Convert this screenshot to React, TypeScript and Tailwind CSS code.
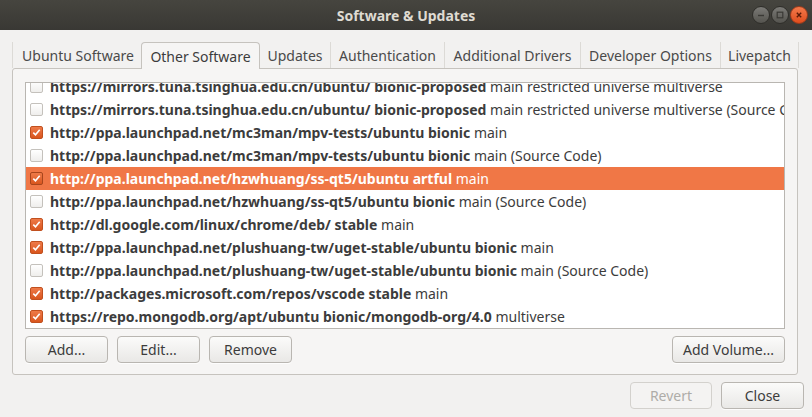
import React from 'react';

type Source = {
  uri: string;
  comps: string;
  checked: boolean;
  selected?: boolean;
};

const sources: Source[] = [
  { uri: 'https://mirrors.tuna.tsinghua.edu.cn/ubuntu/ bionic-proposed', comps: 'main restricted universe multiverse', checked: false },
  {
    uri: 'https://mirrors.tuna.tsinghua.edu.cn/ubuntu/ bionic-proposed',
    comps: 'main restricted universe multiverse (Source Code)',
    checked: false,
  },
  { uri: 'http://ppa.launchpad.net/mc3man/mpv-tests/ubuntu bionic', comps: 'main', checked: true },
  { uri: 'http://ppa.launchpad.net/mc3man/mpv-tests/ubuntu bionic', comps: 'main (Source Code)', checked: false },
  { uri: 'http://ppa.launchpad.net/hzwhuang/ss-qt5/ubuntu artful', comps: 'main', checked: true, selected: true },
  { uri: 'http://ppa.launchpad.net/hzwhuang/ss-qt5/ubuntu bionic', comps: 'main (Source Code)', checked: false },
  { uri: 'http://dl.google.com/linux/chrome/deb/ stable', comps: 'main', checked: true },
  { uri: 'http://ppa.launchpad.net/plushuang-tw/uget-stable/ubuntu bionic', comps: 'main', checked: true },
  { uri: 'http://ppa.launchpad.net/plushuang-tw/uget-stable/ubuntu bionic', comps: 'main (Source Code)', checked: false },
  { uri: 'http://packages.microsoft.com/repos/vscode stable', comps: 'main', checked: true },
  { uri: 'https://repo.mongodb.org/apt/ubuntu bionic/mongodb-org/4.0', comps: 'multiverse', checked: true },
];

const tabs = [
  { label: 'Ubuntu Software', w: 'w-[129px]' },
  { label: 'Other Software', w: 'w-[119px]', active: true },
  { label: 'Updates', w: 'w-[71px]' },
  { label: 'Authentication', w: 'w-[114px]' },
  { label: 'Additional Drivers', w: 'w-[136px]' },
  { label: 'Developer Options', w: 'w-[140px]' },
  { label: 'Livepatch', w: 'w-[78px]' },
];

const CheckBox = ({ checked, selected }: { checked: boolean; selected?: boolean }) =>
  checked ? (
    <span
      className={
        'flex h-[13px] w-[13px] shrink-0 items-center justify-center rounded-[2px] border bg-gradient-to-b from-[#ee7a48] to-[#d9551c] ' +
        (selected ? 'border-[#a8451c]' : 'border-[#c1501f]')
      }
    >
      <svg width="9" height="9" viewBox="0 0 9 9">
        <path d="M1.3 4.6 L3.5 6.8 L7.7 1.8" fill="none" stroke="#fff" strokeWidth="1.6" />
      </svg>
    </span>
  ) : (
    <span className="h-[13px] w-[13px] shrink-0 rounded-[2px] border border-[#c4c1bc] bg-gradient-to-b from-white to-[#efeeec]" />
  );

const Button = ({ children, className = '', disabled }: { children: React.ReactNode; className?: string; disabled?: boolean }) => (
  <button
    className={
      'flex h-[27px] items-center justify-center rounded-[4px] border text-[14px] ' +
      (disabled
        ? 'border-[#d3d1cd] bg-[#f4f3f2] text-[#aeaca8] '
        : 'border-[#b9b6b1] bg-gradient-to-b from-[#fbfbfa] to-[#e9e8e6] text-[#3c3c3c] shadow-[0_1px_0_rgba(255,255,255,0.8)] ') +
      className
    }
  >
    {children}
  </button>
);

const WinButton = ({ kind }: { kind: 'min' | 'max' | 'close' }) => (
  <span
    className={
      'flex h-[18px] w-[18px] items-center justify-center rounded-full border ' +
      (kind === 'close'
        ? 'border-[#9c3b1c] bg-gradient-to-b from-[#f3794a] to-[#df4c1b]'
        : 'border-[#2f2e2a] bg-gradient-to-b from-[#7b7a76] to-[#55544f]')
    }
  >
    <svg width="10" height="10" viewBox="0 0 10 10">
      {kind === 'min' && <path d="M2 5.5 H8" stroke="#3a3935" strokeWidth="1.4" />}
      {kind === 'max' && <rect x="2.2" y="2.2" width="5.6" height="5.6" fill="none" stroke="#3a3935" strokeWidth="1.2" />}
      {kind === 'close' && <path d="M2.8 2.8 L7.2 7.2 M7.2 2.8 L2.8 7.2" stroke="#5b1a07" strokeWidth="1.4" />}
    </svg>
  </span>
);

export default function App() {
  return (
    <div className="flex h-[417px] w-[812px] flex-col overflow-hidden bg-[#f2f1f0] font-['Noto_Sans',sans-serif] text-[#3c3c3c]">
      <div className="relative flex h-[30px] shrink-0 items-center justify-center bg-gradient-to-b from-[#46453f] to-[#393834]">
        <span className="text-[14px] font-bold text-[#dfdbd2]">Software &amp; Updates</span>
        <div className="absolute right-[4px] top-[6px] flex gap-[1px]">
          <WinButton kind="min" />
          <WinButton kind="max" />
          <WinButton kind="close" />
        </div>
      </div>

      <div className="flex flex-1 flex-col px-[12px] pt-[12px]">
        <div className="flex h-[26px] items-end">
          {tabs.map((t, i) => (
            <div
              key={t.label}
              className={
                t.w +
                ' flex items-center justify-center text-[14px] ' +
                (t.active
                  ? 'relative z-10 -mb-px h-[27px] rounded-t-[4px] border border-b-0 border-[#c6c3be] bg-[#f6f5f4] text-[#3c3c3c]'
                  : 'h-[26px] border-[#dcdad6] text-[#4a4a4a] ' + (i === 0 ? 'border-l pl-[2px]' : 'border-r'))
              }
            >
              {t.label}
            </div>
          ))}
        </div>

        <div className="flex h-[307px] w-[786px] flex-col rounded-[3px] border border-[#c6c3be] bg-[#f6f5f4] px-[12px] pt-[13px]">
          <div className="h-[247px] overflow-hidden border border-[#b9b6b1] bg-white">
            <div className="-mt-[8px]">
              {sources.map((s, i) => (
                <div
                  key={i}
                  className={
                    'flex h-[23px] items-center gap-[7px] whitespace-nowrap pl-[4px] text-[14px] ' +
                    (s.selected ? 'bg-[#f07746] text-white' : 'text-[#3c3c3c]')
                  }
                >
                  <CheckBox checked={s.checked} selected={s.selected} />
                  <span>
                    <b className="font-bold">{s.uri}</b> {s.comps}
                  </span>
                </div>
              ))}
            </div>
          </div>

          <div className="mt-[7px] flex items-center">
            <Button className="w-[83px]">Add...</Button>
            <Button className="ml-[9px] w-[83px]">Edit...</Button>
            <Button className="ml-[9px] w-[83px]">Remove</Button>
            <Button className="ml-auto w-[113px]">Add Volume...</Button>
          </div>
        </div>

        <div className="mt-[7px] flex justify-end gap-[9px]">
          <Button disabled className="w-[82px]">
            Revert
          </Button>
          <Button className="-mr-[4px] w-[83px]">Close</Button>
        </div>
      </div>
    </div>
  );
}
